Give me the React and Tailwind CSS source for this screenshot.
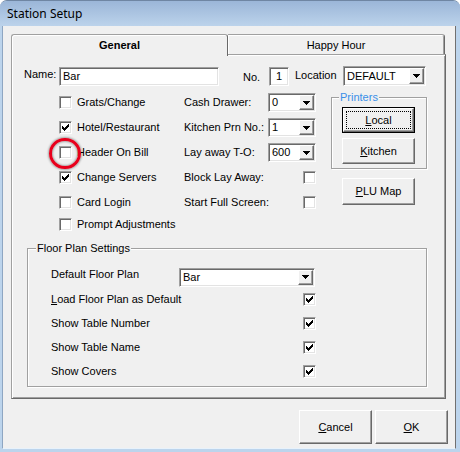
import React from 'react';

const sunken =
  'bg-white border border-t-[#a0a0a0] border-l-[#a0a0a0] border-r-white border-b-white shadow-[inset_1px_1px_0_#696969,inset_-1px_-1px_0_#e3e3e3]';
const raised =
  'bg-[#f0f0f0] border border-t-white border-l-white border-r-[#696969] border-b-[#696969] shadow-[inset_-1px_-1px_0_#a0a0a0]';

// classic 7x7 tick, one rect per pixel run
const tick = [
  [6, 0, 1], [5, 1, 2], [0, 2, 1], [4, 2, 3], [0, 3, 2], [3, 3, 3], [0, 4, 5], [1, 5, 3], [2, 6, 1]
];

function Check({ checked }) {
  return (
    <span className={`relative block w-[13px] h-[13px] shrink-0 ${sunken}`}>
      {checked && (
        <svg className="absolute left-[2px] top-[2px]" width="7" height="7" viewBox="0 0 7 7" shapeRendering="crispEdges">
          {tick.map(([x, y, w]) => (
            <rect key={`${x}-${y}`} x={x} y={y} width={w} height="1" fill="#000" />
          ))}
        </svg>
      )}
    </span>
  );
}

function Combo({ value, className }) {
  return (
    <div className={`flex p-[1px] shrink-0 ${sunken} ${className}`}>
      <div className="flex-1 flex items-center pl-[2px] leading-none">{value}</div>
      <div className={`w-[15px] h-full flex items-center justify-center ${raised}`}>
        <svg width="7" height="4" viewBox="0 0 7 4" shapeRendering="crispEdges">
          <rect x="0" y="0" width="7" height="1" fill="#000" />
          <rect x="1" y="1" width="5" height="1" fill="#000" />
          <rect x="2" y="2" width="3" height="1" fill="#000" />
          <rect x="3" y="3" width="1" height="1" fill="#000" />
        </svg>
      </div>
    </div>
  );
}

function Btn({ children, className = '', isDefault = false }) {
  if (isDefault) {
    return (
      <div className={`border border-black bg-[#f0f0f0] shrink-0 ${className}`}>
        <div className={`h-full p-[2px] ${raised}`}>
          <div className="h-full flex items-center justify-center border border-dotted border-black">
            {children}
          </div>
        </div>
      </div>
    );
  }
  return <div className={`flex items-center justify-center shrink-0 ${raised} ${className}`}>{children}</div>;
}

const U = ({ children }) => <span className="underline underline-offset-[1px]">{children}</span>;

function CheckRow({ label, checked }) {
  return (
    <div className="h-[25px] flex items-center">
      <Check checked={checked} />
      <span className="ml-[5px] whitespace-nowrap">{label}</span>
    </div>
  );
}

function ComboRow({ label, value }) {
  return (
    <div className="h-[25px] flex items-center">
      <span className="w-[85px] pl-[1px] whitespace-nowrap">{label}</span>
      <Combo value={value} className="w-[48px] h-[19px]" />
    </div>
  );
}

function BoxRow({ label }) {
  return (
    <div className="h-[25px] flex items-center">
      <span className="w-[120px] pl-[1px] whitespace-nowrap">{label}</span>
      <Check />
    </div>
  );
}

function FloorRow({ label, checked }) {
  return (
    <div className="h-[24px] flex items-center">
      <span className="w-[252px] whitespace-nowrap">{label}</span>
      <Check checked={checked} />
    </div>
  );
}

export default function App() {
  return (
    <div className="relative w-[460px] h-[452px] flex flex-col bg-[#bcd4ec] rounded-t-[7px] border-t border-[#6f86a3] overflow-hidden font-['Liberation_Sans',Arial,sans-serif] text-[11px] text-black">
      {/* title bar */}
      <div className="h-[25px] shrink-0 flex items-center pl-[7px] bg-linear-to-b from-[#9bb6d8] to-[#bcd3eb] font-['Noto_Sans',sans-serif] text-[12px] text-black">
        Station Setup
      </div>

      <div className="flex-1 ml-[2px] mr-[4px] mb-[3px] bg-[#f0f0f0] border-l border-r border-l-[#8ea6c2] border-r-[#707070] border-b border-b-[#e8f2fb] flex flex-col">
        <div className="mt-[8px] ml-[8px] w-[435px]">
          {/* tabs */}
          <div className="flex items-end h-[20px]">
            <div className="relative z-10 w-[217px] h-[22px] -mb-[2px] flex items-center justify-center bg-[#f0f0f0] border-l border-t border-r border-l-[#a0a0a0] border-t-[#a0a0a0] border-r-[#696969] rounded-t-[3px] shadow-[inset_1px_1px_0_#fff] font-bold">
              General
            </div>
            <div className="w-[217px] h-[20px] flex items-center justify-center pt-[2px] bg-[#f0f0f0] border-t border-r border-t-[#a0a0a0] border-r-[#696969] rounded-tr-[3px] shadow-[inset_1px_1px_0_#fff,inset_-1px_0_0_#a0a0a0]">
              Happy Hour
            </div>
          </div>

          {/* panel */}
          <div className="w-[435px] h-[345px] border border-t-[#a0a0a0] border-l-[#a0a0a0] border-r-[#696969] border-b-[#696969] shadow-[inset_1px_1px_0_#fff,inset_-1px_-1px_0_#a0a0a0] pt-[11px] pl-[12px]">
            {/* name row */}
            <div className="flex items-center h-[20px]">
              <span className="w-[35px] -mt-[4px]">Name:</span>
              <div className={`w-[160px] h-[19px] flex items-center pl-[3px] ${sunken}`}>Bar</div>
              <span className="ml-[24px] w-[26px] mt-[3px]">No.</span>
              <div className={`w-[20px] h-[19px] flex items-center pl-[6px] ${sunken}`}>1</div>
              <span className="ml-[6px] w-[48px] -mt-[1px]">Location</span>
              <Combo value="DEFAULT" className="w-[83px] h-[20px]" />
            </div>

            {/* options */}
            <div className="mt-[4px] flex pl-[35px]">
              <div className="w-[124px] flex flex-col">
                <CheckRow label="Grats/Change" />
                <CheckRow label="Hotel/Restaurant" checked />
                <CheckRow label="Header On Bill" />
                <CheckRow label="Change Servers" checked />
                <CheckRow label="Card Login" />
                <div className="h-[19px] flex items-center">
                  <Check />
                  <span className="ml-[5px] whitespace-nowrap">Prompt Adjustments</span>
                </div>
              </div>

              <div className="w-[148px] flex flex-col">
                <ComboRow label="Cash Drawer:" value="0" />
                <ComboRow label="Kitchen Prn No.:" value="1" />
                <ComboRow label="Lay away T-O:" value="600" />
                <BoxRow label="Block Lay Away:" />
                <BoxRow label="Start Full Screen:" />
              </div>

              <div className="w-[96px] flex flex-col">
                <div className="relative mt-[7px] w-[96px] h-[72px] border border-[#a0a0a0] shadow-[inset_1px_1px_0_#fff,1px_1px_0_#fff] pt-[9px] pl-[10px] flex flex-col gap-[5px]">
                  <span className="absolute -top-[7px] left-[7px] px-[1px] leading-[13px] bg-[#f0f0f0] text-[#3a8fe8]">Printers</span>
                  <Btn isDefault className="w-[73px] h-[26px]">
                    <U>L</U>ocal
                  </Btn>
                  <Btn className="w-[73px] h-[26px]">
                    <U>K</U>itchen
                  </Btn>
                </div>
                <Btn className="mt-[9px] ml-[11px] w-[73px] h-[27px]">
                  <U>P</U>LU Map
                </Btn>
              </div>
            </div>

            {/* floor plan settings */}
            <div className="relative mt-[14px] ml-[3px] w-[400px] h-[139px] border border-[#a0a0a0] shadow-[inset_1px_1px_0_#fff,1px_1px_0_#fff] pt-[18px] pl-[23px]">
              <span className="absolute -top-[7px] left-[8px] px-[1px] leading-[13px] bg-[#f0f0f0]">Floor Plan Settings</span>
              <div className="h-[20px] flex items-center">
                <span className="w-[128px] -mt-[6px] whitespace-nowrap">Default Floor Plan</span>
                <Combo value="Bar" className="w-[136px] h-[19px]" />
              </div>
              <FloorRow
                label={
                  <>
                    <U>L</U>oad Floor Plan as Default
                  </>
                }
                checked
              />
              <FloorRow label="Show Table Number" checked />
              <FloorRow label="Show Table Name" checked />
              <FloorRow label="Show Covers" checked />
            </div>
          </div>
        </div>

        {/* dialog buttons */}
        <div className="mt-[11px] flex justify-end gap-[3px] pr-[7px]">
          <Btn className="w-[73px] h-[34px]">
            <U>C</U>ancel
          </Btn>
          <Btn className="w-[73px] h-[34px]">
            <U>O</U>K
          </Btn>
        </div>
      </div>

      {/* highlight ring */}
      <div className="absolute left-[49px] top-[137px] w-[32px] h-[31px] rounded-full border-[3px] border-[#e8001c] shadow-[0_0_2px_1px_rgba(0,0,0,0.3),inset_0_0_2px_1px_rgba(0,0,0,0.3)] pointer-events-none" />
    </div>
  );
}
